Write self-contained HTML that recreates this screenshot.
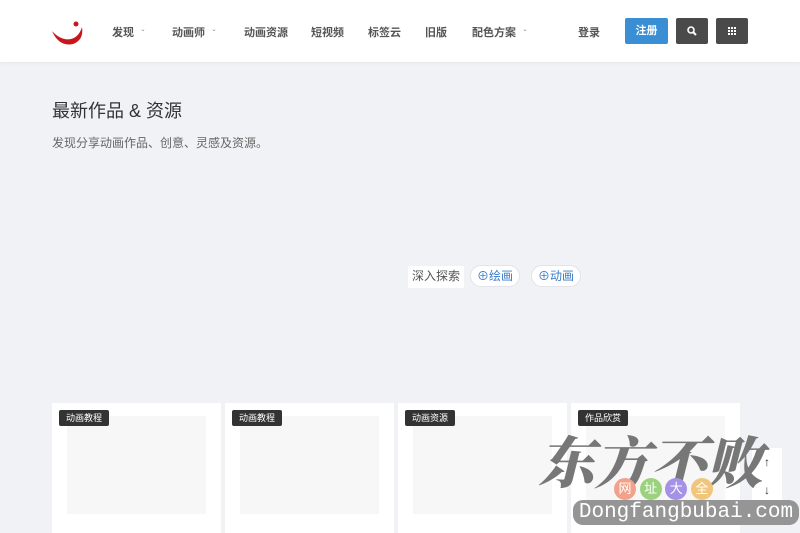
<!DOCTYPE html>
<html><head><meta charset="utf-8"><style>
*{margin:0;padding:0;box-sizing:border-box}
body{width:800px;height:528px;overflow:hidden;background:#f1f2f6;font-family:"Liberation Sans","Noto Sans CJK SC",sans-serif;position:relative;color:#333}
.hd{position:absolute;left:0;top:0;width:800px;height:62px;background:#fff;box-shadow:0 1px 3px rgba(0,0,0,.05)}
.nav{position:absolute;top:24px;font-size:11px;color:#555;font-weight:bold}
.btn{position:absolute;top:18px;height:26px;border-radius:2px}
h1{position:absolute;left:52px;top:97px;font-size:18px;font-weight:normal;color:#333}
.sub{position:absolute;left:52px;top:134px;font-size:12px;color:#666}
.pill{position:absolute;top:265px;height:22px;border-radius:11px;background:#fff;border:1px solid #e2e4ea;font-size:12px;color:#3a7bc8;line-height:20px;padding:0 6px}
.card{position:absolute;top:403px;width:169px;height:130px;background:#fff}
.ph{position:absolute;left:15px;top:13px;width:139px;height:98px;background:#f7f7f8}
.tag{position:absolute;left:7px;top:7px;height:16px;padding:0 7px;background:#333;color:#fff;font-size:9px;line-height:16px;border-radius:2px}
.wm{position:absolute;font-family:"Noto Serif CJK SC",serif;font-weight:900;color:#777;font-size:56px;top:420px;left:544px;letter-spacing:0px;transform:skewX(-14deg)}
</style></head><body>
<div class="hd">
<svg style="position:absolute;left:51px;top:19px" width="34" height="30" viewBox="0 0 34 30"><path d="M1 12 Q8 28 22 25 Q33 21 31 8 Q28 18 20 20 Q10 22 1 12Z" fill="#c8161d"/><circle cx="25" cy="5" r="2.5" fill="#c8161d"/></svg>
<div class="nav" style="left:112px">发现 <span style="font-size:8px;color:#999">&nbsp;&nbsp;ˇ</span></div>
<div class="nav" style="left:172px">动画师 <span style="font-size:8px;color:#999">&nbsp;&nbsp;ˇ</span></div>
<div class="nav" style="left:244px">动画资源</div>
<div class="nav" style="left:311px">短视频</div>
<div class="nav" style="left:368px">标签云</div>
<div class="nav" style="left:425px">旧版</div>
<div class="nav" style="left:472px">配色方案 <span style="font-size:8px;color:#999">&nbsp;&nbsp;ˇ</span></div>
<div class="nav" style="left:578px">登录</div>
<div class="btn" style="left:625px;width:43px;background:#3a8ed4;color:#fff;font-size:11px;font-weight:bold;text-align:center;line-height:26px">注册</div>
<div class="btn" style="left:676px;width:32px;background:#4a4a4a"><svg width="32" height="26"><circle cx="15" cy="12" r="3" stroke="#fff" stroke-width="1.6" fill="none"/><path d="M17 14 L20 17" stroke="#fff" stroke-width="2"/></svg></div>
<div class="btn" style="left:716px;width:32px;background:#4a4a4a"><svg width="32" height="26"><g fill="#fff"><rect x="12" y="9" width="2" height="2"/><rect x="15" y="9" width="2" height="2"/><rect x="18" y="9" width="2" height="2"/><rect x="12" y="12" width="2" height="2"/><rect x="15" y="12" width="2" height="2"/><rect x="18" y="12" width="2" height="2"/><rect x="12" y="15" width="2" height="2"/><rect x="15" y="15" width="2" height="2"/><rect x="18" y="15" width="2" height="2"/></g></svg></div>
</div>
<h1>最新作品 &amp; 资源</h1>
<div class="sub">发现分享动画作品、创意、灵感及资源。</div>
<div style="position:absolute;left:408px;top:266px;height:22px;background:#fff;font-size:12px;line-height:20px;padding:0 4px;color:#555">深入探索</div>
<div class="pill" style="left:470px">⊕绘画</div>
<div class="pill" style="left:531px">⊕动画</div>
<div class="card" style="left:52px"><div class="ph"></div><div class="tag">动画教程</div></div>
<div class="card" style="left:225px"><div class="ph"></div><div class="tag">动画教程</div></div>
<div class="card" style="left:398px"><div class="ph"></div><div class="tag">动画资源</div></div>
<div class="card" style="left:571px"><div class="ph"></div><div class="tag">作品欣赏</div></div>
<div style="position:absolute;left:752px;top:448px;width:30px;height:60px;background:#fff;font-size:12px;text-align:center;line-height:28px;color:#333">↑<br>↓</div>
<div class="wm">东方不败</div>
<div style="position:absolute;left:614px;top:478px;font-size:13px;color:#fff">
<span style="display:inline-block;width:22px;height:22px;border-radius:11px;background:#f0a28a;text-align:center;line-height:22px">网</span>
<span style="display:inline-block;width:22px;height:22px;border-radius:11px;background:#9cd27e;text-align:center;line-height:22px">址</span>
<span style="display:inline-block;width:22px;height:22px;border-radius:11px;background:#a592e6;text-align:center;line-height:22px">大</span>
<span style="display:inline-block;width:22px;height:22px;border-radius:11px;background:#f2c57c;text-align:center;line-height:22px">全</span></div>
<div style="position:absolute;left:573px;top:500px;width:226px;height:25px;border-radius:10px;background:#959595;color:#fff;font-family:'Liberation Mono',monospace;font-size:21px;line-height:25px;text-align:center">Dongfangbubai.com</div>
</body></html>
